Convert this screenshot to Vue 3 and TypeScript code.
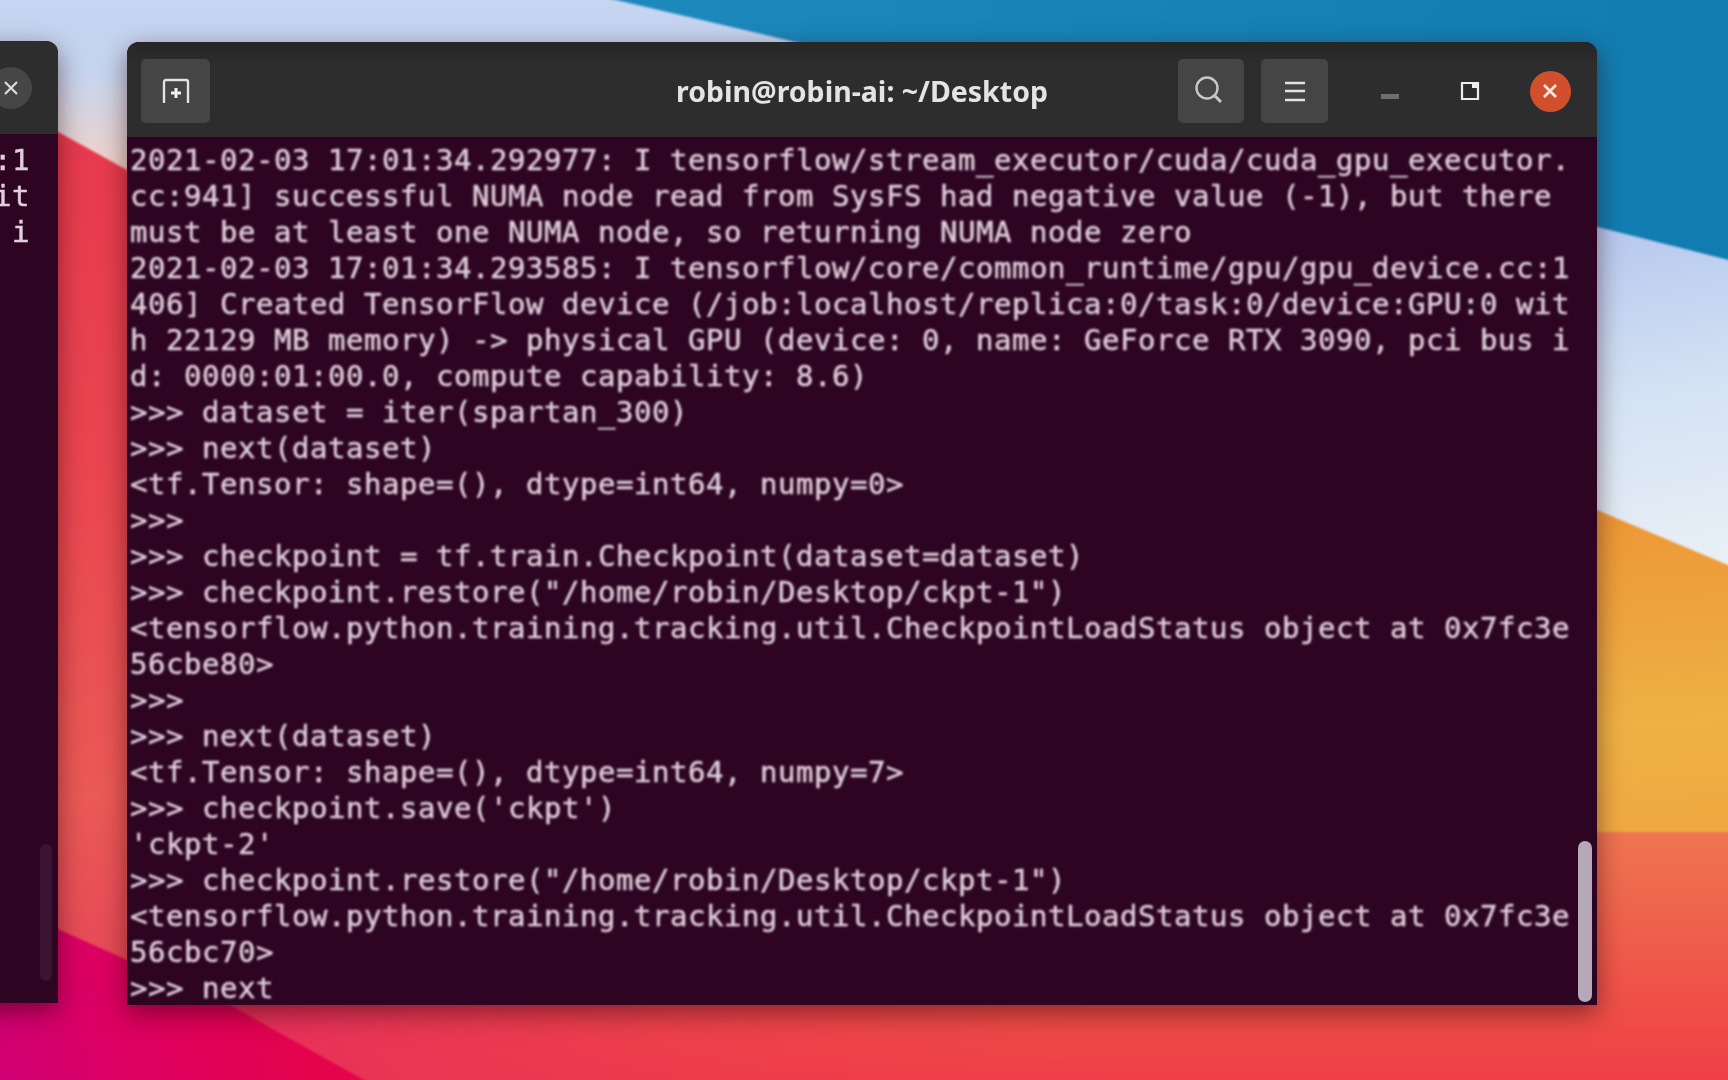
<script setup lang="ts">
const lines: string[] = [
  "2021-02-03 17:01:34.292977: I tensorflow/stream_executor/cuda/cuda_gpu_executor.",
  "cc:941] successful NUMA node read from SysFS had negative value (-1), but there",
  "must be at least one NUMA node, so returning NUMA node zero",
  "2021-02-03 17:01:34.293585: I tensorflow/core/common_runtime/gpu/gpu_device.cc:1",
  "406] Created TensorFlow device (/job:localhost/replica:0/task:0/device:GPU:0 wit",
  "h 22129 MB memory) -> physical GPU (device: 0, name: GeForce RTX 3090, pci bus i",
  "d: 0000:01:00.0, compute capability: 8.6)",
  ">>> dataset = iter(spartan_300)",
  ">>> next(dataset)",
  "<tf.Tensor: shape=(), dtype=int64, numpy=0>",
  ">>> ",
  ">>> checkpoint = tf.train.Checkpoint(dataset=dataset)",
  '>>> checkpoint.restore("/home/robin/Desktop/ckpt-1")',
  "<tensorflow.python.training.tracking.util.CheckpointLoadStatus object at 0x7fc3e",
  "56cbe80>",
  ">>> ",
  ">>> next(dataset)",
  "<tf.Tensor: shape=(), dtype=int64, numpy=7>",
  ">>> checkpoint.save('ckpt')",
  "'ckpt-2'",
  '>>> checkpoint.restore("/home/robin/Desktop/ckpt-1")',
  "<tensorflow.python.training.tracking.util.CheckpointLoadStatus object at 0x7fc3e",
  "56cbc70>",
  ">>> next",
];
const sideLines: string[] = [":1", "it", "i"];
</script>

<template>
  <div class="desktop">
    <svg class="wallpaper" viewBox="-12 -12 1752 1104" preserveAspectRatio="none" aria-hidden="true">
      <defs>
        <linearGradient id="sky" x1="0" y1="0" x2="0" y2="1">
          <stop offset="0" stop-color="#c6d5f0" />
          <stop offset="1" stop-color="#b9c8ea" />
        </linearGradient>
        <linearGradient id="peach" x1="0" y1="0" x2="0" y2="1">
          <stop offset="0" stop-color="#f6d6c6" stop-opacity="0" />
          <stop offset="1" stop-color="#f6d0c0" />
        </linearGradient>
        <linearGradient id="pale" gradientUnits="userSpaceOnUse" x1="1600" y1="230" x2="1660" y2="560">
          <stop offset="0" stop-color="#b7c8ee" />
          <stop offset="0.5" stop-color="#d4e2f4" />
          <stop offset="1" stop-color="#e8eff6" />
        </linearGradient>
        <linearGradient id="blue" gradientUnits="userSpaceOnUse" x1="700" y1="0" x2="1728" y2="200">
          <stop offset="0" stop-color="#1d88bc" />
          <stop offset="1" stop-color="#117cb0" />
        </linearGradient>
        <linearGradient id="orange" gradientUnits="userSpaceOnUse" x1="1640" y1="520" x2="1660" y2="832">
          <stop offset="0" stop-color="#ed9838" />
          <stop offset="0.65" stop-color="#eeb145" />
          <stop offset="1" stop-color="#f0a942" />
        </linearGradient>
        <linearGradient id="coral" gradientUnits="userSpaceOnUse" x1="0" y1="832" x2="0" y2="1080">
          <stop offset="0" stop-color="#ef7552" />
          <stop offset="0.7" stop-color="#ef4f47" />
          <stop offset="1" stop-color="#ef3f48" />
        </linearGradient>
        <linearGradient id="floor" gradientUnits="userSpaceOnUse" x1="250" y1="0" x2="1100" y2="0">
          <stop offset="0" stop-color="#e8305a" />
          <stop offset="1" stop-color="#ee3e48" stop-opacity="0" />
        </linearGradient>
        <linearGradient id="red" gradientUnits="userSpaceOnUse" x1="0" y1="140" x2="0" y2="960">
          <stop offset="0" stop-color="#e83a4e" />
          <stop offset="0.4" stop-color="#ea4650" />
          <stop offset="0.8" stop-color="#ea5a56" />
          <stop offset="1" stop-color="#e84a58" />
        </linearGradient>
        <linearGradient id="crimson" gradientUnits="userSpaceOnUse" x1="0" y1="1080" x2="300" y2="1000">
          <stop offset="0" stop-color="#d00074" />
          <stop offset="0.45" stop-color="#de0060" />
          <stop offset="1" stop-color="#e4044c" />
        </linearGradient>
      </defs>
      <rect x="-12" y="-12" width="1752" height="1104" fill="url(#sky)" />
      <rect x="-12" y="70" width="160" height="110" fill="url(#peach)" />
      <path d="M565 -12 L791 41 L1597 227 L1740 263 V-12 Z" fill="url(#blue)" />
      <path d="M1400 182 L1597 227 L1740 263 V572 L1400 460 Z" fill="url(#pale)" />
      <path d="M1400 450 L1597 510 L1740 570 V840 H1400 Z" fill="url(#orange)" />
      <path d="M-12 94 L60 133 L127 170 L400 330 V1092 H-12 Z" fill="url(#red)" />
      <rect x="127" y="832" width="1613" height="260" fill="url(#coral)" />
      <rect x="127" y="1000" width="1000" height="92" fill="url(#floor)" />
      <path d="M-12 895 L60 930 L127 960 L230 1005 L364 1080 L390 1092 H-12 Z" fill="url(#crimson)" />
    </svg>

    <section class="window side">
      <header class="side-bar">
        <span class="side-close">
          <svg width="22" height="22" viewBox="0 0 22 22" aria-hidden="true">
            <path d="M5 5 L17 17 M17 5 L5 17" stroke="#dedede" stroke-width="2.2" fill="none" />
          </svg>
        </span>
      </header>
      <div class="side-body">
        <div v-for="(t, i) in sideLines" :key="i" class="line">{{ t }}</div>
        <span class="side-scroll"></span>
      </div>
    </section>

    <section class="window main">
      <header class="titlebar">
        <div class="bar-left">
          <button class="tool">
            <svg width="32" height="28" viewBox="0 0 32 28" aria-hidden="true">
              <path d="M4 26 V5 Q4 3 6 3 H26 Q28 3 28 5 V26" stroke="#e2e2e2" stroke-width="2.4" fill="none" />
              <path d="M16 11 V21 M11 16 H21" stroke="#f0f0f0" stroke-width="3" fill="none" />
            </svg>
          </button>
        </div>
        <h1 class="title">robin@robin-ai: ~/Desktop</h1>
        <div class="bar-right">
          <button class="tool search">
            <svg width="36" height="36" viewBox="3 1 36 36" aria-hidden="true">
              <circle cx="17" cy="16" r="10.5" stroke="#c8c8c8" stroke-width="2.4" fill="none" />
              <path d="M25 24 L31 30" stroke="#c8c8c8" stroke-width="3" fill="none" />
            </svg>
          </button>
          <button class="tool menu">
            <svg width="24" height="24" viewBox="0 0 24 24" aria-hidden="true">
              <path d="M2 4 H22 M2 12 H22 M2 21 H22" stroke="#e2e2e2" stroke-width="2.6" fill="none" />
            </svg>
          </button>
          <span class="ctl">
            <span class="min"></span>
          </span>
          <span class="ctl">
            <svg width="20" height="20" viewBox="0 0 20 20" aria-hidden="true">
              <path d="M2 2 H18 V18 H2 Z" stroke="#efefef" stroke-width="2.2" fill="none" />
              <path d="M12 2 H18 V7 H12 Z" fill="#efefef" />
            </svg>
          </span>
          <span class="ctl">
            <span class="close">
              <svg width="18" height="18" viewBox="0 0 18 18" aria-hidden="true">
                <path d="M3 3 L15 15 M15 3 L3 15" stroke="#f6e6e0" stroke-width="2.8" fill="none" />
              </svg>
            </span>
          </span>
        </div>
      </header>
      <div class="term">
        <div class="term-text">
          <div v-for="(t, i) in lines" :key="i" class="line">{{ t }}</div>
        </div>
        <span class="scrollbar"></span>
      </div>
    </section>
  </div>
</template>

<style scoped>
.desktop {
  position: relative;
  width: 1728px;
  height: 1080px;
  overflow: hidden;
  background: #c6d5f0;
}
.wallpaper {
  position: absolute;
  left: -12px;
  top: -12px;
  width: 1752px;
  height: 1104px;
  filter: blur(1.2px);
}
.window {
  position: absolute;
  display: flex;
  flex-direction: column;
  border-radius: 12px 12px 0 0;
  overflow: hidden;
  box-shadow: 0 8px 26px rgba(40, 0, 10, 0.5);
  background: #2d0522;
}
.main {
  left: 127px;
  top: 42px;
  width: 1470px;
  height: 963px;
}
.side {
  left: -60px;
  top: 41px;
  width: 118px;
  height: 962px;
}
.titlebar {
  display: grid;
  grid-template-columns: 1fr auto 1fr;
  align-items: center;
  flex: none;
  height: 95px;
  padding: 3px 7px 0;
  box-sizing: border-box;
  background: linear-gradient(#262626, #2d2d2d 25%, #2d2d2d);
  filter: blur(0.5px);
}
.bar-left {
  display: flex;
  padding-left: 7px;
}
.bar-right {
  display: flex;
  align-items: center;
  justify-content: flex-end;
}
.tool {
  display: flex;
  align-items: center;
  justify-content: center;
  width: 69px;
  height: 64px;
  padding: 0;
  border: 0;
  border-radius: 5px;
  background: #454545;
}
.search {
  width: 66px;
  margin-right: 17px;
}
.menu {
  width: 67px;
  margin-right: 22px;
}
.ctl {
  display: flex;
  align-items: center;
  justify-content: center;
  width: 80px;
  height: 64px;
}
.min {
  display: block;
  width: 18px;
  height: 5px;
  margin-top: 11px;
  background: #6e6e6e;
}
.close {
  display: flex;
  align-items: center;
  justify-content: center;
  width: 41px;
  height: 41px;
  border-radius: 50%;
  background: #d24f2b;
}
.title {
  margin: 0;
  font-family: "Noto Sans", sans-serif;
  font-size: 28.5px;
  font-weight: 700;
  line-height: 1;
  color: #e4e4e4;
  white-space: nowrap;
  filter: blur(0.5px);
}
.term {
  position: relative;
  flex: 1;
  min-height: 0;
  background: #2d0522;
}
.term-text {
  padding: 5px 0 0 3px;
  filter: blur(0.8px);
}
.line {
  height: 36px;
  font-family: "DejaVu Sans Mono", monospace;
  font-size: 29px;
  letter-spacing: 0.54px;
  line-height: 36px;
  color: #dfcedb;
  white-space: pre;
  -webkit-text-stroke: 0.5px #dfcedb;
}
.scrollbar {
  position: absolute;
  right: 5px;
  bottom: 3px;
  width: 14px;
  height: 161px;
  border-radius: 7px;
  background: #b5a9b8;
}
.side-bar {
  display: flex;
  align-items: center;
  justify-content: flex-end;
  flex: none;
  height: 93px;
  padding-right: 26px;
  box-sizing: border-box;
  background: #2d2d2d;
  filter: blur(0.5px);
}
.side-close {
  display: flex;
  align-items: center;
  justify-content: center;
  width: 42px;
  height: 42px;
  border-radius: 50%;
  background: #464646;
}
.side-body {
  position: relative;
  flex: 1;
  padding: 8px 28px 0 0;
  text-align: right;
  background: #2d0522;
}
.side-body .line {
  filter: blur(0.6px);
}
.side-scroll {
  position: absolute;
  right: 6px;
  bottom: 22px;
  width: 12px;
  height: 137px;
  border-radius: 6px;
  background: #3a1432;
}
</style>
